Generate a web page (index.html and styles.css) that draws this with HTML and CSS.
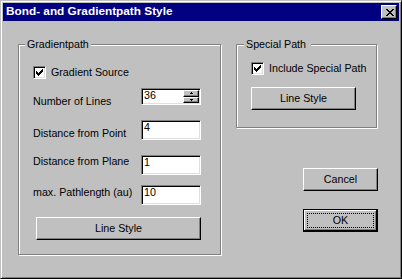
FILE: index.html
```html
<!DOCTYPE html>
<html>
<head>
    <meta charset="utf-8">
    <title>Bond- and Gradientpath Style</title>
    <link rel="stylesheet" href="styles.css">
</head>
<body>
    <div class="window">
        <div class="titlebar">
            <span class="title">Bond- and Gradientpath Style</span>
            <div class="close-btn">
                <svg width="8" height="7" viewBox="0 0 8 7" shape-rendering="crispEdges"><path fill="#000" d="M0 0h2v1h-2z M6 0h2v1h-2z M1 1h2v1h-2z M5 1h2v1h-2z M2 2h4v1h-4z M3 3h2v1h-2z M2 4h4v1h-4z M1 5h2v1h-2z M5 5h2v1h-2z M0 6h2v1h-2z M6 6h2v1h-2z"/></svg>
            </div>
        </div>
        <div class="client">
            <fieldset class="group group-grad">
                <legend>Gradientpath</legend>
                <div class="check-row grad-check">
                    <span class="checkbox">
                        <svg width="7" height="7" viewBox="0 0 7 7" shape-rendering="crispEdges"><path fill="#000" d="M0 2h1v3h-1z M1 3h1v3h-1z M2 4h1v3h-1z M3 3h1v3h-1z M4 2h1v3h-1z M5 1h1v3h-1z M6 0h1v3h-1z"/></svg>
                    </span>
                    <span>Gradient Source</span>
                </div>
                <div class="field-row row-lines">
                    <span class="label lbl-low">Number of Lines</span>
                    <div class="spin">
                        <span class="spin-text">36</span>
                        <div class="spin-btns">
                            <span class="spin-btn"><svg width="3" height="2" viewBox="0 0 3 2" shape-rendering="crispEdges"><path fill="#000" d="M1 0h1v1h-1z M0 1h3v1h-3z"/></svg></span>
                            <span class="spin-btn"><svg width="3" height="2" viewBox="0 0 3 2" shape-rendering="crispEdges"><path fill="#000" d="M0 0h3v1h-3z M1 1h1v1h-1z"/></svg></span>
                        </div>
                    </div>
                </div>
                <div class="field-row row-point">
                    <span class="label lbl-low">Distance from Point</span>
                    <div class="edit">4</div>
                </div>
                <div class="field-row row-plane">
                    <span class="label">Distance from Plane</span>
                    <div class="edit">1</div>
                </div>
                <div class="field-row row-max">
                    <span class="label lbl-high">max. Pathlength (au)</span>
                    <div class="edit">10</div>
                </div>
                <div class="button btn-grad-style">Line Style</div>
            </fieldset>

            <div class="side">
                <fieldset class="group group-special">
                    <legend>Special Path</legend>
                    <div class="check-row special-check">
                        <span class="checkbox">
                            <svg width="7" height="7" viewBox="0 0 7 7" shape-rendering="crispEdges"><path fill="#000" d="M0 2h1v3h-1z M1 3h1v3h-1z M2 4h1v3h-1z M3 3h1v3h-1z M4 2h1v3h-1z M5 1h1v3h-1z M6 0h1v3h-1z"/></svg>
                        </span>
                        <span>Include Special Path</span>
                    </div>
                    <div class="button btn-special-style">Line Style</div>
                </fieldset>
                <div class="button btn-cancel">Cancel</div>
                <div class="button btn-ok"><span class="focus">OK</span></div>
            </div>
        </div>
    </div>
</body>
</html>
```

FILE: styles.css
```css
* {
    box-sizing: border-box;
}
html, body {
    margin: 0;
}
body {
    background-color: #c0c0c0;
    font-family: "Liberation Sans", Arial, sans-serif;
    font-size: 10.7px;
    color: #000;
}

/* window frame */
.window {
    width: 402px;
    height: 279px;
    padding: 2px;
    border: 1px solid;
    border-color: #c0c0c0 #000 #000 #c0c0c0;
    box-shadow: inset 1px 1px 0 #fff, inset -1px -1px 0 #808080;
    background-color: #c0c0c0;
    display: flex;
    flex-direction: column;
}
.titlebar {
    height: 18px;
    flex: none;
    background-color: #000080;
    color: #fff;
    display: flex;
    justify-content: space-between;
    align-items: center;
    padding: 0 2px 0 3px;
}
.title {
    align-self: flex-start;
    font-weight: bold;
    font-size: 11.8px;
    line-height: 16px;
}
.close-btn {
    width: 16px;
    height: 14px;
    padding-left: 2px;
    background-color: #c0c0c0;
    border: 1px solid;
    border-color: #fff #000 #000 #fff;
    box-shadow: inset -1px -1px 0 #808080;
    display: flex;
    align-items: center;
    justify-content: center;
}

/* dialog body */
.client {
    flex: 1;
    display: flex;
    padding: 17px 0 0 15px;
}
.group {
    margin: 0;
    padding: 0 0 0 14px;
    min-width: 0;
    border: 1px solid #808080;
    box-shadow: 1px 1px 0 #fff, inset 1px 1px 0 #fff;
}
.group legend {
    margin-left: -8px;
    padding: 0 2px;
    line-height: 13px;
    background-color: #c0c0c0;
}
.group-grad {
    width: 203px;
    height: 217px;
    flex: none;
}
.side {
    margin-left: 15px;
    display: flex;
    flex-direction: column;
    align-items: flex-start;
}
.group-special {
    width: 141px;
    height: 90px;
}
.group-special legend {
    margin-left: -7px;
    padding-right: 5px;
}

/* checkboxes */
.check-row {
    display: flex;
    align-items: flex-start;
    line-height: 13px;
}
.grad-check {
    margin-top: 15px;
}
.special-check {
    margin-top: 11px;
}
.checkbox {
    width: 13px;
    height: 13px;
    flex: none;
    margin-right: 5px;
    background-color: #fff;
    border: 1px solid;
    border-color: #808080 #fff #fff #808080;
    box-shadow: inset 1px 1px 0 #000, inset -1px -1px 0 #dfdfdf;
    display: flex;
    align-items: center;
    justify-content: center;
}

/* label + edit rows */
.field-row {
    display: flex;
    align-items: flex-start;
}
.row-lines { margin-top: 9px; }
.row-point { margin-top: 12px; }
.row-plane { margin-top: 15px; }
.row-max { margin-top: 10px; }
.label {
    width: 108px;
    flex: none;
    line-height: 13px;
}
.lbl-low { margin-top: 7px; }
.lbl-high { margin-top: 1px; }

.edit, .spin {
    width: 60px;
    color: #000;
    background-color: #fff;
    border: 1px solid;
    border-color: #808080 #fff #fff #808080;
    box-shadow: inset 1px 1px 0 #000, inset -1px -1px 0 #dfdfdf;
    line-height: 11px;
}
.edit {
    height: 20px;
    padding: 1px 0 0 2px;
}
.spin {
    height: 17px;
    padding: 1px 1px 1px 2px;
    display: flex;
}
.spin-text {
    flex: 1;
}
.spin-btns {
    width: 16px;
    display: flex;
    flex-direction: column;
}
.spin-btn {
    flex: 1;
    background-color: #c0c0c0;
    border: 1px solid;
    border-color: #fff #000 #000 #fff;
    box-shadow: inset -1px -1px 0 #808080;
    display: flex;
    align-items: center;
    justify-content: center;
}

/* push buttons */
.button {
    height: 23px;
    flex: none;
    border: 1px solid;
    border-color: #fff #000 #000 #fff;
    box-shadow: inset -1px -1px 0 #808080;
    display: flex;
    align-items: center;
    justify-content: center;
    line-height: 13px;
    padding-bottom: 1px;
}
.btn-grad-style {
    width: 165px;
    margin: 12px 0 0 3px;
}
.btn-special-style {
    width: 105px;
    margin-top: 12px;
}
.btn-cancel {
    width: 75px;
    margin: 40px 0 0 67px;
}
.btn-ok {
    width: 75px;
    margin: 18px 0 0 67px;
    padding: 3px;
    border-color: #000;
    box-shadow: inset -1px -1px 0 #000, inset 1px 1px 0 #fff, inset -2px -2px 0 #808080;
}
.focus {
    flex: 1;
    align-self: stretch;
    border: 1px dotted #000;
    display: flex;
    align-items: center;
    justify-content: center;
}
```
